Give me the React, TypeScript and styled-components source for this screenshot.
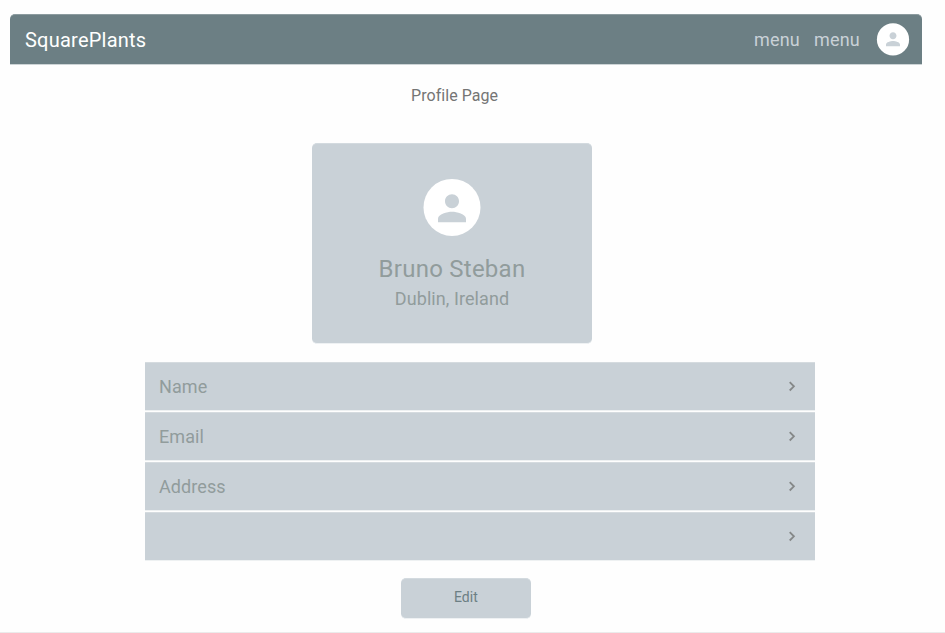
import React from "react";
import styled, { createGlobalStyle } from "styled-components";

const Global = createGlobalStyle`
  * { box-sizing: border-box; }
  body { margin: 0; background: #fefefe; font-family: Roboto, sans-serif; overflow: hidden; }
`;

const Page = styled.main`
  height: 633px;
  padding-top: 14px;
  border-bottom: 1px solid #ebebeb;
  display: flex;
  flex-direction: column;
  align-items: flex-start;
`;

const Navbar = styled.header`
  width: 912px;
  height: 51px;
  margin-left: 10px;
  padding: 0 12px 0 15px;
  display: flex;
  align-items: center;
  background: #6c7f84;
  border-top: 1px solid #8c9b9f;
  border-bottom: 1px solid #cdd4d6;
  border-radius: 5px 5px 0 0;
`;

const Brand = styled.div`
  flex: 1;
  font-size: 20px;
  line-height: 24px;
  letter-spacing: 0.23px;
  color: #fff;
`;

const MenuLink = styled.a`
  margin-right: 14px;
  font-size: 18px;
  line-height: 24px;
  letter-spacing: 0.2px;
  color: #c9d1d7;
`;

const AvatarIcon = styled.svg`
  display: block;
  flex: none;
`;

const NavAvatar = styled.span`
  margin: 0 0 1px 2px;
`;

const Title = styled.h1`
  margin: 21px 0 0 411px;
  font-size: 16px;
  font-weight: 400;
  line-height: 20px;
  letter-spacing: 0.05px;
  color: #757575;
`;

const Card = styled.section`
  width: 280px;
  height: 201px;
  margin: 37px 0 0 312px;
  padding-top: 34px;
  display: flex;
  flex-direction: column;
  align-items: center;
  background: #c9d1d7;
  border-top: 1px solid #d3dadf;
  border-bottom: 1px solid #eef1f3;
  border-radius: 5px;
`;

const PersonName = styled.div`
  margin-top: 18px;
  font-size: 24px;
  line-height: 30px;
  letter-spacing: 0.25px;
  color: #919c9c;
`;

const Location = styled.div`
  margin-top: 2px;
  font-size: 18px;
  line-height: 26px;
  letter-spacing: 0.08px;
  color: #919c9c;
`;

const Fields = styled.ul`
  width: 670px;
  margin: 18px 0 0 145px;
  padding: 0;
  display: grid;
  gap: 1px;
  list-style: none;
`;

const Field = styled.li`
  height: 49px;
  padding: 0 16px 0 14px;
  display: flex;
  align-items: center;
  justify-content: space-between;
  background: #c9d1d7;
  border-top: 1px solid #d5dbdf;
  border-bottom: 1px solid #eef1f2;
  font-size: 18px;
  line-height: 24px;
  letter-spacing: 0.08px;
  color: #919c9c;
`;

const EditButton = styled.button`
  width: 130px;
  height: 41px;
  margin: 17px 0 0 401px;
  padding: 0 0 4px;
  border: 0;
  border-top: 1px solid #d3dadf;
  border-bottom: 1px solid #eef1f3;
  border-radius: 5px;
  background: #c9d1d7;
  font: 400 14px/20px Roboto, sans-serif;
  letter-spacing: 0.1px;
  color: #6c7f84;
`;

interface AvatarProps {
  size: number;
  radius: number;
  iconScale: number;
  iconY: number;
}

const Avatar = ({ size, radius, iconScale, iconY }: AvatarProps) => (
  <AvatarIcon width={size} height={size} viewBox={`0 0 ${size} ${size}`}>
    <circle cx={size / 2} cy={size / 2 + 0.4} r={radius} fill="#fff" />
    <path
      fill="#c9d1d7"
      transform={`translate(${size / 2 - 12 * iconScale} ${iconY}) scale(${iconScale})`}
      d="M12 12c2.21 0 4-1.79 4-4s-1.79-4-4-4-4 1.79-4 4 1.79 4 4 4zm0 2c-2.67 0-8 1.34-8 4v2h16v-2c0-2.66-5.33-4-8-4z"
    />
  </AvatarIcon>
);

const Chevron = () => (
  <svg width="14" height="16" viewBox="0 0 14 16" fill="none" stroke="#858888" strokeWidth="1.8">
    <path d="M4.7 3.1 8.9 7.3 4.7 11.5" />
  </svg>
);

const fields = ["Name", "Email", "Address", ""];

export default function App() {
  return (
    <>
      <Global />
      <Page>
        <Navbar>
          <Brand>SquarePlants</Brand>
          <MenuLink>menu</MenuLink>
          <MenuLink>menu</MenuLink>
          <NavAvatar>
            <Avatar size={34} radius={16.1} iconScale={0.875} iconY={6.8} />
          </NavAvatar>
        </Navbar>
        <Title>Profile Page</Title>
        <Card>
          <Avatar size={58} radius={28.5} iconScale={1.75} iconY={9.2} />
          <PersonName>Bruno Steban</PersonName>
          <Location>Dublin, Ireland</Location>
        </Card>
        <Fields>
          {fields.map((label, i) => (
            <Field key={i}><span>{label}</span><Chevron /></Field>
          ))}
        </Fields>
        <EditButton>Edit</EditButton>
      </Page>
    </>
  );
}
